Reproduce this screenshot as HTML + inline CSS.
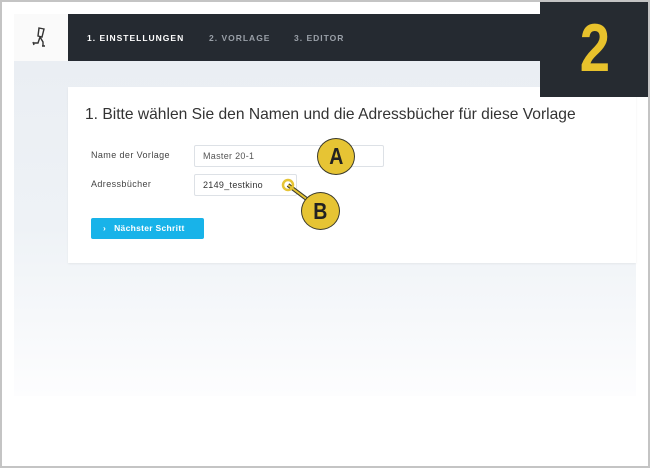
<!DOCTYPE html>
<html><head><meta charset="utf-8"><style>
*{margin:0;padding:0;box-sizing:border-box}
body{width:650px;height:468px;position:relative;overflow:hidden;background:#fff;font-family:"Liberation Sans",sans-serif}
.frame{position:absolute;left:0;top:0;width:650px;height:468px;border:2px solid #c4c4c4}
.bg{position:absolute;left:14px;top:14px;width:622px;height:382px;background:linear-gradient(#e9edf2 0%,#eef2f6 55%,#fdfdfe 100%)}
.side{position:absolute;left:14px;top:14px;width:54px;height:47px;background:#fafafa}
.nav{position:absolute;left:68px;top:14px;width:568px;height:47px;background:#252a31;color:#9aa0a8;font-size:8.5px;font-weight:bold;letter-spacing:1px}
.nav span{position:absolute;top:19px}
.card{position:absolute;left:68px;top:87px;width:568px;height:176px;background:#fff;box-shadow:0 1px 2px rgba(0,0,0,.06)}
.badge{position:absolute;left:540px;top:0;width:110px;height:97px;background:#262b31;color:#e8c22c;font-size:68px;font-weight:bold;text-align:center;line-height:97px;font-family:"Liberation Sans Narrow","Liberation Sans",sans-serif}
.t{position:absolute;left:85px;top:106px;font-size:15.6px;color:#333}
.lbl{position:absolute;left:91px;font-size:9px;color:#444;letter-spacing:.4px}
.inp{position:absolute;border:1px solid #dde1e6;border-radius:2px;font-size:9px;color:#555;padding-left:8px;line-height:20px;letter-spacing:.3px}
.btn{position:absolute;left:91px;top:218px;width:113px;height:21px;background:#18b3e9;border-radius:2px;color:#fff;font-size:8.5px;font-weight:bold;line-height:21px;padding-left:12px;letter-spacing:.3px}
.c{position:absolute;border-radius:50%;background:#e6c434;border:1.5px solid #3a3a2a;color:#222;font-weight:bold;text-align:center;font-size:23px}
.c span{display:inline-block;transform:scaleX(.85)}
</style></head><body>
<div class="bg"></div>
<div class="side"></div>
<svg style="position:absolute;left:30px;top:26px" width="22" height="24" viewBox="0 0 22 24"><path d="M9 2l5 1-2 8-4-1z M10 11l-2 6-4 0 M10 11l3 5 0 4 M3 16l1 3 M12 20h3" fill="none" stroke="#333" stroke-width="1.4"/></svg>
<div class="nav"><span style="left:19px;color:#fff">1. EINSTELLUNGEN</span><span style="left:141px">2. VORLAGE</span><span style="left:226px">3. EDITOR</span></div>
<div class="card"></div>
<div class="t">1. Bitte wählen Sie den Namen und die Adressbücher für diese Vorlage</div>
<div class="lbl" style="top:150px">Name der Vorlage</div>
<div class="lbl" style="top:179px">Adressbücher</div>
<div class="inp" style="left:194px;top:145px;width:190px;height:22px">Master 20-1</div>
<div class="inp" style="left:194px;top:174px;width:103px;height:22px;color:#333">2149_testkino</div>
<div class="btn">›&nbsp;&nbsp; Nächster Schritt</div>
<svg style="position:absolute;left:278px;top:176px" width="40" height="30"><line x1="10" y1="9" x2="30" y2="24" stroke="#3a3a2a" stroke-width="4"/><line x1="10" y1="9" x2="30" y2="24" stroke="#e6c434" stroke-width="2"/><circle cx="10" cy="9" r="5" fill="none" stroke="#e6c434" stroke-width="2.5"/></svg>
<div class="c" style="left:317px;top:138px;width:38px;height:37px;line-height:35px"><span>A</span></div>
<div class="c" style="left:301px;top:192px;width:39px;height:38px;line-height:36px"><span>B</span></div>
<div class="badge"><span style="display:inline-block;transform:scaleX(.8)">2</span></div>
<div class="frame"></div>
</body></html>
